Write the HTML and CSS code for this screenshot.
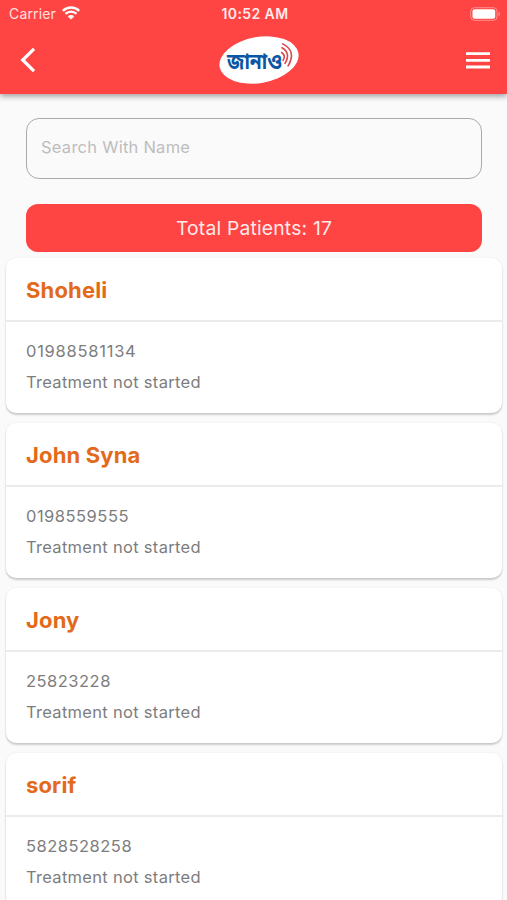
FILE: index.html
```html
<!DOCTYPE html>
<html lang="en">
<head>
<meta charset="utf-8">
<title>Patients</title>
<link rel="stylesheet" href="styles.css">
</head>
<body>
<header class="header">
  <div class="status">
    <div class="carrier">
      <span>Carrier</span>
      <svg class="wifi" width="18" height="14" viewBox="0 0 18 14" fill="none" stroke="#fff" stroke-width="2.3"><path d="M.8 4.9a11.6 11.6 0 0 1 16.4 0M3.5 7.9a7.8 7.8 0 0 1 11 0"/><path d="M9 13.6 5.8 10.4a4.5 4.5 0 0 1 6.4 0Z" fill="#fff" stroke="none"/></svg>
    </div>
    <span class="time">10:52 AM</span>
    <svg class="battery" width="31" height="14" viewBox="0 0 31 14"><rect x=".7" y=".7" width="26.4" height="12.6" rx="3.8" fill="none" stroke="#fff" stroke-opacity=".4"/><rect x="2.5" y="2.2" width="22.7" height="9.6" rx="2" fill="#fff"/><path d="M28.5 4.8v4.4q1.5-.7 1.5-2.2t-1.5-2.2Z" fill="#fff" fill-opacity=".45"/></svg>
  </div>
  <nav class="bar">
    <svg width="16" height="26" viewBox="0 0 16 26" fill="none" stroke="#fff" stroke-width="3.2"><path d="M14 1.8 2.7 13 14 24.2"/></svg>
    <svg class="logo" width="82" height="52" viewBox="0 0 82 52">
      <ellipse cx="41" cy="26" rx="40" ry="23" fill="#fff" transform="rotate(-10 41 26)"/>
      <text class="logo-text" x="9" y="34.5" textLength="55" lengthAdjust="spacingAndGlyphs">জানাও</text>
      <g fill="none" stroke="#d9464b" stroke-width="1.6" stroke-linecap="round"><path d="M63.6 18.5q4.7 3.6 1.5 7.8M64 13.7q9.3 5.6 3 15.6M64.7 9.9q14.2 7 5.4 22"/></g>
    </svg>
    <svg width="24" height="17" viewBox="0 0 24 17" fill="#fff"><path d="M0 .3h24v2.8H0zM0 7h24v2.8H0zM0 13.6h24v2.8H0z"/></svg>
  </nav>
</header>
<main>
  <input class="search" type="text" placeholder="Search With Name">
  <div class="total">Total Patients: 17</div>
  <section class="list">
    <article class="card"><h2>Shoheli</h2><div class="info"><p class="phone phone-wide">01988581134</p><p>Treatment not started</p></div></article>
    <article class="card"><h2>John Syna</h2><div class="info"><p class="phone">0198559555</p><p>Treatment not started</p></div></article>
    <article class="card"><h2>Jony</h2><div class="info"><p class="phone">25823228</p><p>Treatment not started</p></div></article>
    <article class="card"><h2>sorif</h2><div class="info"><p class="phone">5828528258</p><p>Treatment not started</p></div></article>
  </section>
</main>
</body>
</html>
```
FILE: styles.css
```css
* { box-sizing: border-box; }
body {
  margin: 0;
  height: 900px;
  overflow: hidden;
  background: #fafafa;
  font-family: Inter, "Liberation Sans", sans-serif;
}
.header {
  position: relative;
  height: 94px;
  background: #ff4444;
  color: #fff;
  box-shadow: 0 2px 6px rgba(0, 0, 0, .4);
}
.status {
  display: grid;
  grid-template-columns: 1fr auto 1fr;
  align-items: center;
  height: 27px;
  padding: 0 6px 0 9px;
  font-size: 14px;
}
.carrier {
  display: flex;
  align-items: center;
  gap: 6px;
  color: #ffe0e0;
  letter-spacing: .15px;
}
.wifi { margin-top: -1px; }
.time {
  font-weight: 600;
  font-size: 14px;
  letter-spacing: .4px;
  color: #ffeaea;
}
.battery { justify-self: end; }
.bar {
  display: grid;
  grid-template-columns: 1fr auto 1fr;
  align-items: center;
  height: 66px;
  padding: 0 17px 0 20px;
}
.bar > :first-child { justify-self: start; }
.bar > :last-child { justify-self: end; }
.logo { margin-left: 8px; }
.logo-text {
  font-family: "Noto Sans Bengali", "Noto Sans", sans-serif;
  font-size: 22.5px;
  font-weight: 700;
  fill: #0b56a5;
}
.search {
  display: block;
  width: 456px;
  height: 61px;
  margin: 24px 0 0 26px;
  padding: 0 14px 3px;
  border: 1.5px solid #aaa;
  border-radius: 13px;
  background: transparent;
  font: 16.5px Inter, sans-serif;
  letter-spacing: .25px;
}
.search::placeholder { color: #bdbdbd; opacity: 1; }
.total {
  width: 456px;
  height: 48px;
  margin: 25px 0 0 26px;
  border-radius: 12px;
  background: #ff4444;
  color: #ffe9e9;
  font-size: 19.3px;
  line-height: 49px;
  letter-spacing: .2px;
  text-align: center;
}
.list {
  display: grid;
  gap: 10px;
  padding: 6px 5px 0 6px;
}
.card {
  height: 155px;
  border-radius: 10px;
  background: #fff;
  box-shadow: 0 2px 2px rgba(0, 0, 0, .18), 0 0 2px rgba(0, 0, 0, .08);
}
.card h2 {
  height: 64px;
  margin: 0;
  padding-left: 20px;
  border-bottom: 2px solid #ebebeb;
  color: #e46a1b;
  font-size: 22px;
  font-weight: 700;
  line-height: 64px;
  letter-spacing: .15px;
}
.info { padding: 14px 20px 0; }
.info p {
  margin: 0;
  color: #7d7d7d;
  font-size: 16.5px;
  line-height: 31px;
  letter-spacing: .3px;
}
.info .phone { letter-spacing: .5px; }
.info .phone-wide { letter-spacing: .75px; }
```
